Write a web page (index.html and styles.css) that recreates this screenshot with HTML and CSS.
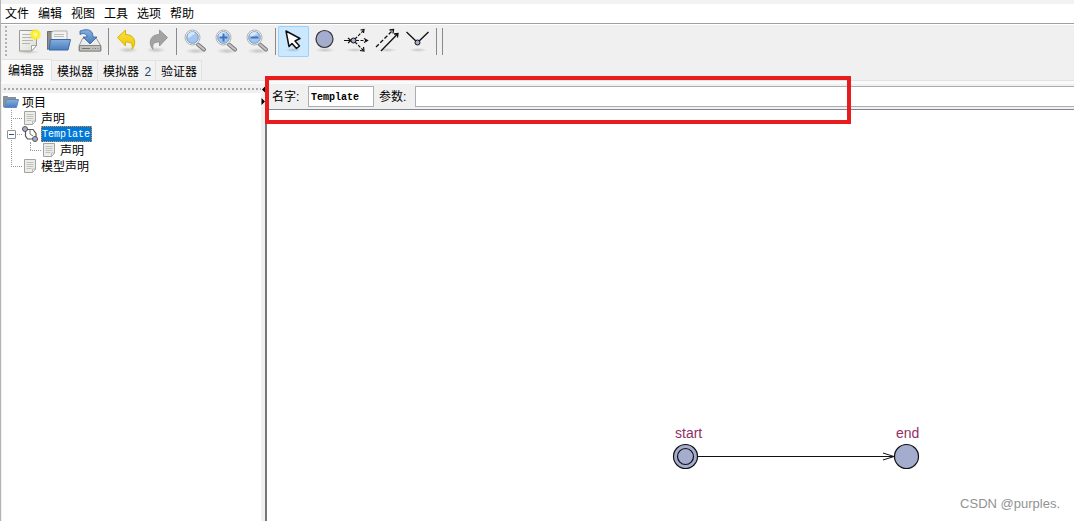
FILE: index.html
```html
<!DOCTYPE html>
<html lang="zh-CN">
<head>
<meta charset="utf-8">
<title>Template</title>
<link rel="stylesheet" href="styles.css">
</head>
<body>
<svg class="defs" aria-hidden="true">
  <defs>
    <linearGradient id="blue" x1="0" y1="0" x2="0" y2="1"><stop offset="0" stop-color="#86afdf"/><stop offset="1" stop-color="#4a7dbc"/></linearGradient>
    <linearGradient id="paper" x1="0" y1="0" x2="1" y2="1"><stop offset="0" stop-color="#fafaf8"/><stop offset="1" stop-color="#dcdcd8"/></linearGradient>
    <linearGradient id="gold" x1="0" y1="0" x2="0" y2="1"><stop offset="0" stop-color="#f7e04a"/><stop offset="1" stop-color="#ecc400"/></linearGradient>
    <radialGradient id="glow"><stop offset="0" stop-color="#fffbd0"/><stop offset=".35" stop-color="#fff34a"/><stop offset=".65" stop-color="#f7ec20"/><stop offset="1" stop-color="#f7ec20" stop-opacity="0"/></radialGradient>
    <radialGradient id="shade"><stop offset="0" stop-color="#000" stop-opacity=".18"/><stop offset="1" stop-color="#000" stop-opacity="0"/></radialGradient>
    <symbol id="doc" viewBox="0 0 14 16">
      <path d="M1.500 1.500h11v9.500l-3 3.500h-8z" fill="#ececea" stroke="#a2a29f"/>
      <path d="M3.500 4.500h7M3.500 6.500h7M3.500 8.500h7M3.500 10.500h5" stroke="#c0c0bd"/>
      <path d="M12.500 11h-3v3.500z" fill="#fff" stroke="#a2a29f" stroke-width=".7"/>
    </symbol>
    <symbol id="lens" viewBox="0 0 31 31">
      <ellipse cx="17" cy="25" rx="11" ry="3" fill="url(#shade)"/>
      <path d="M19 18.500l6 5" stroke="#777" stroke-width="4" stroke-linecap="round"/>
      <path d="M19 18.500l6 5" stroke="#c4c4c4" stroke-width="2" stroke-linecap="round"/>
      <circle cx="13.500" cy="11.500" r="7.500" fill="#f4f4f4" stroke="#b0b0ad"/>
      <circle cx="13.500" cy="11.500" r="5.800" fill="#a4c6ee" stroke="#6c97cd"/>
      <path d="M9.500 12a4 4 0 0 1 7-4c-3 0-4 3-7 4z" fill="#d5e6fa"/>
    </symbol>
  </defs>
</svg>
<div class="window">
  <nav class="menubar">
    <button class="menu">文件</button><button class="menu">编辑</button><button class="menu">视图</button><button class="menu">工具</button><button class="menu">选项</button><button class="menu">帮助</button>
  </nav>

  <div class="toolbar" role="toolbar">
    <span class="grip"></span>
    <button class="tool" aria-label="新建"><svg viewBox="0 0 31 31"><ellipse cx="16" cy="26" rx="12" ry="2" fill="url(#shade)"/><path d="M7.500 4.500h17v15l-5 5.500h-12z" fill="url(#paper)" stroke="#989894"/><path d="M10 8.500h9M10 11.500h11M10 14.500h11M10 17.500h8" stroke="#b4b4b0"/><path d="M24.500 19.500h-5v5.500z" fill="#fff" stroke="#a5a5a0"/><circle cx="23.500" cy="8.500" r="6" fill="url(#glow)"/></svg></button>
    <button class="tool" aria-label="打开"><svg viewBox="0 0 31 31"><path d="M4.500 23.500V5.500h6l2 2h11v5z" fill="#8d8d89" stroke="#6d6d69"/><path d="M8.500 15V6.500l2-1.500h13.500v9z" fill="#f2f2f0" stroke="#b0b0ac"/><path d="M11 8.500h10M11 10.500h10" stroke="#bcbcb8"/><path d="M7.500 13.500h20l-2.500 10.500h-19z" fill="url(#blue)" stroke="#376aaa"/></svg></button>
    <button class="tool" aria-label="保存"><svg viewBox="0 0 31 31"><path d="M8.500 12.500h14l4.500 7.500v5h-22v-5z" fill="#ececea" stroke="#999996"/><path d="M5.500 19.500h21v5.500h-21z" fill="#bfbfbc" stroke="#858582"/><path d="M8 22.500h8M18.500 22.500h1M21 22.500h1M23.500 22.500h1" stroke="#747471"/><path d="M6 5c8-3 13-1 13 6h4l-7 7-7-7h4c0-3-3-4.500-7-2.500z" fill="url(#blue)" stroke="#2f609e" stroke-width=".8"/></svg></button>
    <span class="rule"></span>
    <button class="tool" aria-label="撤销"><svg viewBox="0 0 31 31"><ellipse cx="17" cy="24" rx="10" ry="3" fill="url(#shade)"/><path d="M6.500 11.500l8-7.500v4.500c9 0 12 8 6.500 15 1-6-1-7.500-6.500-7.500v4z" fill="url(#gold)" stroke="#dcb400"/></svg></button>
    <button class="tool" aria-label="重做"><svg viewBox="0 0 31 31"><ellipse cx="14" cy="24" rx="10" ry="3" fill="url(#shade)"/><path d="M25.500 11.500l-8-7.500v4.500c-9 0-12 8-6.500 15-1-6 1-7.500 6.500-7.500v4z" fill="#a3a3a3" stroke="#979797"/></svg></button>
    <span class="rule"></span>
    <button class="tool" aria-label="缩放"><svg viewBox="0 0 31 31"><use href="#lens"/></svg></button>
    <button class="tool" aria-label="放大"><svg viewBox="0 0 31 31"><use href="#lens"/><path d="M9.500 11.500h8M13.500 7.500v8" stroke="#3f74b7" stroke-width="2"/></svg></button>
    <button class="tool" aria-label="缩小"><svg viewBox="0 0 31 31"><use href="#lens"/><path d="M9.500 11.500h8" stroke="#3f74b7" stroke-width="2"/></svg></button>
    <span class="rule"></span>
    <button class="tool tool-on" aria-label="选择" aria-pressed="true"><svg viewBox="0 0 31 31"><ellipse cx="15" cy="24" rx="8" ry="2" fill="url(#shade)"/><path d="M8 5l3 15.500 3-3 4.500 5 3-2.500-4.500-5 5-2.500z" fill="#fff" stroke="#111" stroke-width="1.500" stroke-linejoin="round"/></svg></button>
    <button class="tool" aria-label="位置"><svg viewBox="0 0 31 31"><ellipse cx="16" cy="24" rx="10" ry="2.500" fill="url(#shade)"/><circle cx="15.500" cy="13" r="8.500" fill="#a5adcf" stroke="#333" stroke-width="1.200"/></svg></button>
    <button class="tool" aria-label="分支"><svg viewBox="0 0 31 31"><ellipse cx="15" cy="24" rx="10" ry="2" fill="url(#shade)"/><g fill="none" stroke="#111" stroke-width="1.200"><path d="M4 14.500h7M8 12l3 2.500-3 2.500"/><path d="M15 13l9-9M16 14.500h11M15 16l8 8" stroke-dasharray="3 1.500"/><path d="M20.500 4l3.500-.500-.500 3.500M24 12.500l3.500 2-3.500 2M20 24.500l4 .5-.5-4"/></g><circle cx="13.500" cy="14.500" r="2.500" fill="#a5adcf" stroke="#111"/></svg></button>
    <button class="tool" aria-label="边"><svg viewBox="0 0 31 31"><ellipse cx="16" cy="24" rx="10" ry="2" fill="url(#shade)"/><g fill="none" stroke="#111" stroke-width="1.300"><path d="M5 21L22 4" stroke-dasharray="4 2"/><path d="M18.500 4l4-.5-.5 4M10 25L27 7.500M23 8l4-.500-.500 4"/></g></svg></button>
    <button class="tool" aria-label="折点"><svg viewBox="0 0 31 31"><ellipse cx="16" cy="24" rx="9" ry="2" fill="url(#shade)"/><path d="M4.500 6l11 10.500 11-10.500" fill="none" stroke="#111" stroke-width="1.300"/><circle cx="15.500" cy="16.500" r="2.500" fill="#a5adcf" stroke="#111"/></svg></button>
    <span class="rule"></span><span class="rule"></span>
  </div>

  <div class="tabs" role="tablist">
    <button class="tab tab-on" role="tab" aria-selected="true">编辑器</button>
    <button class="tab" role="tab">模拟器</button>
    <button class="tab" role="tab">模拟器 <span class="num">2</span></button>
    <button class="tab" role="tab">验证器</button>
  </div>

  <main class="split">
    <aside class="side">
      <div class="dots"></div>
      <ul class="tree">
        <li class="row"><svg class="folder" viewBox="0 0 16 14"><path d="M.5 12V1.500h4l1 1h7v4z" fill="#8d9297" stroke="#858a90"/><path d="M3.500 4.500h12l-2 8h-12z" fill="url(#blue)" stroke="#5b8ac4"/></svg><span class="name">项目</span></li>
        <li class="row level1"><span class="branch"></span><svg class="icon"><use href="#doc"/></svg><span class="name">声明</span></li>
        <li class="row level1"><span class="branch"></span><span class="minus"></span><svg class="icon" viewBox="0 0 16 16"><path d="M3.500 4v6l2 3h6M5 3.500h6l3 4v4" fill="none" stroke="#555" stroke-width="1.200"/><path d="M8 4v4l3 2" fill="none" stroke="#777"/><circle cx="3" cy="3" r="2.500" fill="#a5adcf" stroke="#555"/><circle cx="13" cy="13" r="2.500" fill="#a5adcf" stroke="#555"/></svg><span class="name mono picked">Template</span></li>
        <li class="row level1 level2"><span class="branch"></span><svg class="icon"><use href="#doc"/></svg><span class="name">声明</span></li>
        <li class="row level1 last"><span class="branch"></span><svg class="icon"><use href="#doc"/></svg><span class="name">模型声明</span></li>
      </ul>
    </aside>
    <div class="divider"><svg viewBox="0 0 5 24"><path d="M4.500 2v7l-3.500-3.500zM.5 14v7l3.500-3.500z"/></svg></div>
    <section class="editor">
      <form class="fields">
        <label for="name">名字:</label><input id="name" class="mono short" value="Template">
        <label for="params">参数:</label><input id="params" class="mono long">
      </form>
      <div class="canvas">
        <svg class="diagram">
          <path d="M431 346.500h195M616 343l11 3.500-11 3.500" fill="none" stroke="#111"/>
          <circle class="node" cx="418.500" cy="346.500" r="12"/>
          <circle class="node" cx="418.500" cy="346.500" r="8"/>
          <circle class="node" cx="639.500" cy="346.500" r="12"/>
          <text class="label" x="408" y="328">start</text>
          <text class="label" x="629" y="328">end</text>
        </svg>
        <span class="credit">CSDN @purples.</span>
      </div>
      <div class="highlight"></div>
    </section>
  </main>
</div>
</body>
</html>
```
FILE: styles.css
```css
* { box-sizing: border-box; }
body {
  margin: 0;
  font: 12px/16px "Liberation Sans", "Noto Sans CJK SC", sans-serif;
  color: #000;
  background: #f0f0f0;
}
button, input { font: inherit; color: inherit; }
.defs { position: absolute; width: 0; height: 0; }
.window {
  display: flex;
  flex-direction: column;
  height: 100vh;
  overflow: hidden;
  border-left: 1px solid #b4b4b4;
}
.menubar {
  display: flex;
  gap: 9px;
  height: 24px;
  padding: 1px 4px 0;
  border-top: 4px solid #f2f2f2;
  border-bottom: 1px solid #a0a0a0;
  background: #fff;
}
.menu { padding: 0; border: 0; background: none; line-height: 16px; }

.toolbar { display: flex; height: 36px; padding: 1px 0 4px 4px; border-top: 1px solid #fff; }
.grip {
  width: 7px;
  background: repeating-linear-gradient(#b2b2b2 0 2px, transparent 2px 4px) 0 0 / 2px 100% no-repeat;
}
.tool { width: 31px; height: 31px; padding: 0; border: 0; border-radius: 2px; background: none; }
.tool svg { display: block; width: 31px; height: 31px; }
.tool-on { background: #cce8ff; box-shadow: inset 0 0 0 1px #99d1ff; }
.rule { width: 6px; background: linear-gradient(#8a8a8a, #8a8a8a) 3px 2px / 1px 27px no-repeat; }

.tabs { display: flex; align-items: flex-end; height: 21px; padding-left: 1px; border-bottom: 1px solid #e2e2e2; }
.tab {
  height: 20px;
  padding: 3px 4px 0 5px;
  border: 1px solid #e2e2e2;
  border-left-width: 0;
  border-bottom: 0;
  background: #f2f2f2;
  line-height: 16px;
}
.tab-on { position: relative; height: 22px; margin-bottom: -1px; padding: 2px 7px 2px 6px; background: #fafafa; }
.num { margin-left: 2px; color: #24466e; }

.split { display: flex; flex: 1; min-height: 0; border-top: 3px solid #fafafa; }
.side { display: flex; flex-direction: column; width: 260px; padding-left: 1px; background: #f0f0f0; }
.dots {
  height: 9px;
  margin-left: 2px;
  background: repeating-linear-gradient(90deg, #a8a8a8 0 2px, transparent 2px 4px) 0 4px / 100% 2px no-repeat;
}
.tree { flex: 1; margin: 0; padding: 1px 0 0; list-style: none; background: #fff; }
.row { position: relative; display: flex; align-items: center; height: 16px; }
.folder { width: 16px; height: 14px; margin: 0 3px 0 1px; }
.icon { width: 16px; height: 16px; margin-right: 3px; }
.name { padding: 2px 0 0; line-height: 16px; }
.level1 { padding-left: 9px; background: repeating-linear-gradient(#999 0 1px, transparent 1px 2px) 9px 0 / 1px 100% no-repeat; }
.level2 { padding-left: 28px; }
.level2::before { content: ""; position: absolute; left: 28px; top: 0; height: 8px; border-left: 1px dotted #999; }
.last { background-size: 1px 9px; }
.branch { width: 11px; height: 1px; background: repeating-linear-gradient(90deg, #999 0 1px, transparent 1px 2px); }
.minus { position: absolute; left: 5px; top: 4px; width: 9px; height: 9px; border: 1px solid #919191; border-radius: 1px; background: #fff; }
.minus::after { content: ""; position: absolute; left: 1px; top: 3px; width: 5px; height: 1px; background: #2b4fa0; }
.mono { font-family: "Liberation Mono", "Noto Sans CJK SC", monospace; font-size: 10px; font-weight: bold; }
.picked { padding: 2px 2px 0 1px; outline: 1px dotted #ff8728; outline-offset: -1px; background: #0078d7; color: #fff; line-height: 14px; font-weight: normal; }

.divider { width: 4px; }
.divider svg { display: block; width: 5px; height: 24px; }
.editor { position: relative; display: flex; flex: 1; flex-direction: column; min-width: 0; }
.fields { display: flex; align-items: center; height: 25px; padding: 0 0 1px 7px; }
.fields input { height: 21px; border: 1px solid #abadb3; border-radius: 0; padding: 2px 2px 0; background: #fff; }
.fields label { width: 36px; padding-top: 2px; }
.fields .short { width: 66px; margin-right: 5px; }
.fields .long { flex: 1; min-width: 0; border-right: 0; }
.canvas { position: relative; flex: 1; min-height: 0; border-left: 2px solid #747678; border-top: 1px solid #82878f; background: #fff; }
.diagram { display: block; width: 100%; height: 100%; }
.node { fill: #a5adcf; stroke: #111; stroke-width: 1.2; }
.label { fill: #913066; font: 14px "Liberation Sans", sans-serif; }
.credit { position: absolute; right: 14px; bottom: 9px; color: #929292; font-size: 13px; }
.highlight { position: absolute; left: 0; top: -8px; width: 586px; height: 48px; border: 4px solid #e81c1c; }
```
